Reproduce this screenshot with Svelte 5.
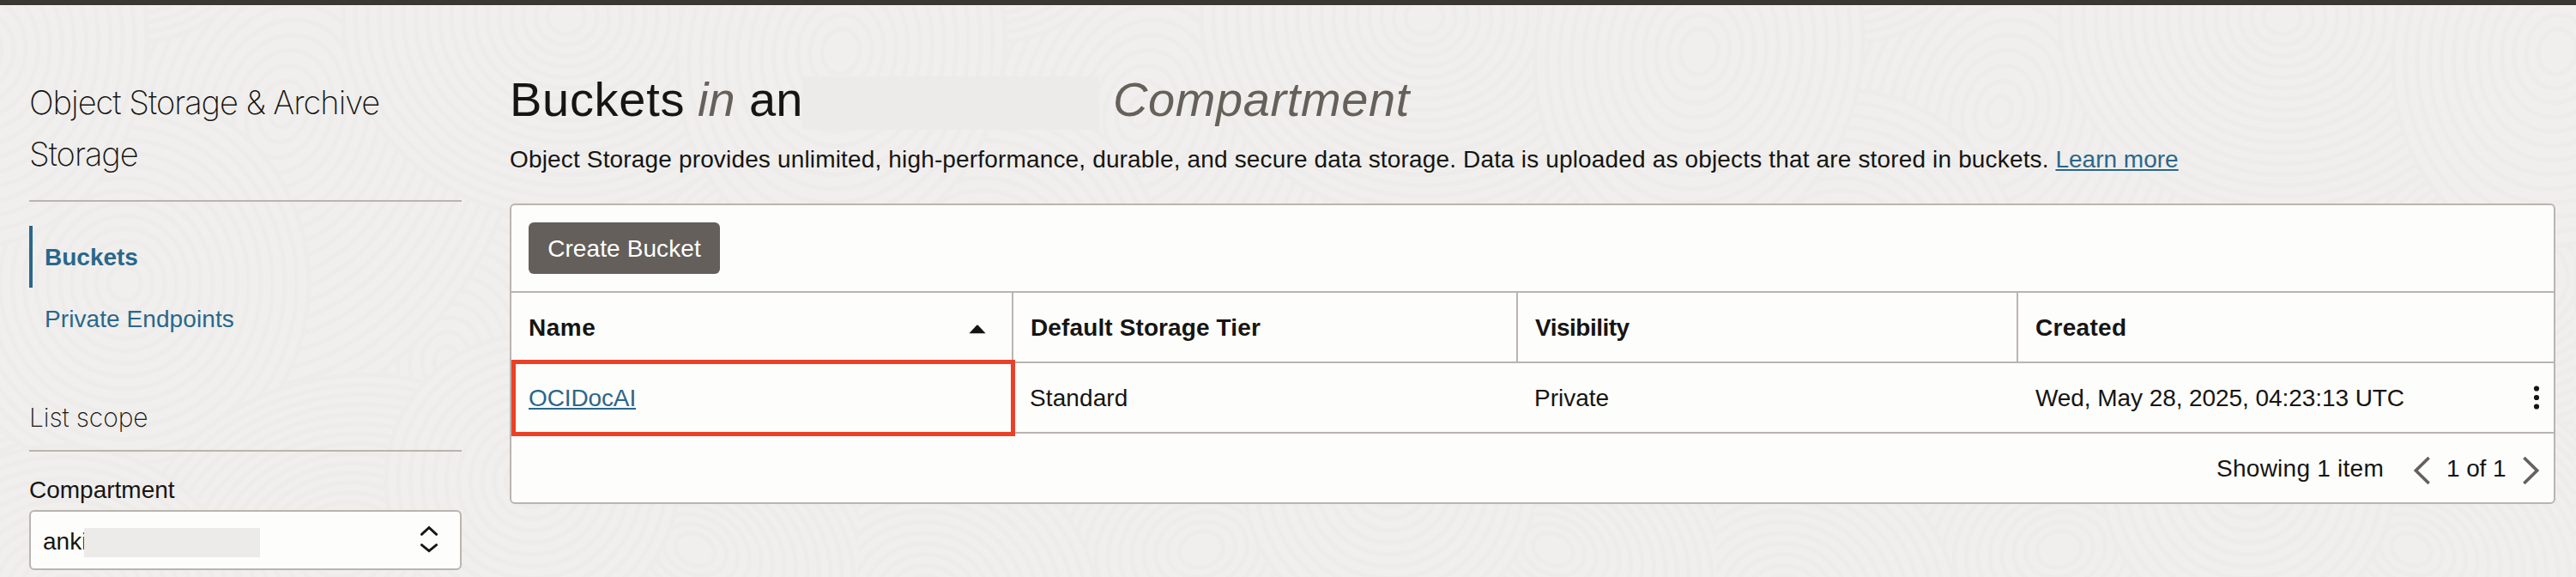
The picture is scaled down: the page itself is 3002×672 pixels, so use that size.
<script>
  const columns = [
    { label: 'Name', cls: 'name', sorted: true },
    { label: 'Default Storage Tier', cls: 'tier' },
    { label: 'Visibility', cls: 'visibility' },
    { label: 'Created', cls: 'created' }
  ];
  const buckets = [
    { name: 'OCIDocAI', tier: 'Standard', visibility: 'Private', created: 'Wed, May 28, 2025, 04:23:13 UTC' }
  ];

  // Ring groups of the repeating background texture: [centre x, centre y, outer radius, flattening, tilt]
  const groups = [
    [520, 420, 420, 1.2, 12], [930, 330, 330, 0.8, -20], [-70, 330, 330, 0.8, -20],
    [330, 130, 280, 1.3, 18], [660, 20, 260, 0.9, 0], [810, 640, 290, 0.75, 24],
    [145, 330, 215, 1.05, 0], [400, 640, 250, 0.8, -14], [80, 700, 200, 0.9, 10],
    [150, -70, 150, 0.8, 0], [980, 60, 190, 1.2, 10], [-20, 60, 190, 1.2, 10],
    [620, 560, 170, 1, 20]
  ];
  const rings = (r) => Array.from({ length: Math.floor(r / 14) }, (_, i) => r - i * 14);
</script>

<div class="page">
  <svg class="texture" width="3002" height="672" aria-hidden="true">
    <defs>
      <pattern id="swirl" width="1000" height="672" patternUnits="userSpaceOnUse">
        <rect width="1000" height="672" fill="#f0efed" />
        {#each groups as [x, y, r, k, tilt]}
          {#each rings(r) as radius}
            <ellipse cx={x} cy={y} rx={radius} ry={radius * k} transform="rotate({tilt} {x} {y})" fill="#f0efed" stroke="#edecea" stroke-width="5" />
          {/each}
        {/each}
      </pattern>
    </defs>
    <rect width="3002" height="672" fill="url(#swirl)" />
  </svg>

  <header class="topbar"></header>

  <div class="layout">
    <aside>
      <h2>Object Storage &amp; Archive Storage</h2>
      <nav>
        <a class="active" href="#buckets">Buckets</a>
        <a class="endpoints" href="#endpoints">Private Endpoints</a>
      </nav>
      <h3>List scope</h3>
      <span class="label">Compartment</span>
      <div class="select">
        <span class="value">anki<i class="mask"></i></span>
        <svg width="24" height="34" viewBox="0 0 24 34" fill="none" stroke="#161513" stroke-width="2.8" stroke-linecap="round">
          <path d="M3.4 11.4 12 3.4l8.6 8M3.4 23.6l8.6 7 8.6-7" />
        </svg>
      </div>
    </aside>

    <main>
      <h1>
        <span class="what">Buckets</span><em class="in">in</em><span class="an">an</span><i class="mask"></i><em class="comp">Compartment</em>
      </h1>
      <p><span>Object Storage provides unlimited, high-performance, durable, and secure data storage. Data is uploaded as objects that are stored in buckets.</span> <a href="#learn">Learn more</a></p>

      <section class="panel">
        <div class="toolbar"><button>Create Bucket</button></div>
        <div class="row head">
          {#each columns as col}
            <div class="cell"><span class={col.cls}>{col.label}</span>
              {#if col.sorted}
                <svg width="20" height="11" viewBox="0 0 20 11"><path d="M9.2.8a1.2 1.2 0 0 1 1.6 0L19.6 10.2H.4Z" fill="#161513" /></svg>
              {/if}
            </div>
          {/each}
        </div>
        {#each buckets as b}
          <div class="row body">
            <div class="cell marked"><a href="#bucket">{b.name}</a></div>
            <div class="cell"><span class="std">{b.tier}</span></div>
            <div class="cell"><span>{b.visibility}</span></div>
            <div class="cell"><span class="date">{b.created}</span>
              <svg width="8" height="30" viewBox="0 0 8 30" fill="#161513"><circle cx="4" cy="4.5" r="3.1" /><circle cx="4" cy="15" r="3.1" /><circle cx="4" cy="25.5" r="3.1" /></svg>
            </div>
          </div>
        {/each}
        <footer>
          <span class="showing">Showing 1 item</span>
          <svg class="prev" width="20" height="36" viewBox="0 0 20 36"><path d="M17.6 3 2.4 18l15.2 15" /></svg>
          <span class="pages">1 of 1</span>
          <svg class="next" width="20" height="36" viewBox="0 0 20 36"><path d="M2.4 3l15.2 15L2.4 33" /></svg>
        </footer>
      </section>
    </main>
  </div>
</div>

<style>
  :global(body) { background: #f0efed; overflow: hidden; }
  .page {
    position: relative;
    height: 672px;
    overflow: hidden;
    color: #161513;
    font: 28px/40px "Liberation Sans", Arial, sans-serif;
    white-space: nowrap;
  }
  .texture { position: absolute; inset: 0; }
  svg { display: block; flex: none; }
  a { color: #2a678b; }
  .topbar { position: relative; height: 6px; background: #3a3632; border-bottom: 1px solid #f6f5f4; }
  .layout { position: relative; display: grid; grid-template-columns: 504px 2384px; column-gap: 56px; padding-left: 34px; }

  aside { padding-top: 82px; }
  h2, h3 { margin: 0; font-family: Inter, sans-serif; font-weight: 200; border-bottom: 2px solid #bab4af; }
  h2 { font-size: 38px; line-height: 60px; letter-spacing: -1.0px; padding-bottom: 24px; white-space: normal; }
  nav { display: flex; flex-direction: column; margin-top: 28px; }
  nav a { box-sizing: border-box; height: 72px; line-height: 74px; padding-left: 14px; border-left: 4px solid transparent; text-decoration: none; }
  nav .active { font-weight: 700; border-color: #2a678b; }
  nav .endpoints { letter-spacing: 0.08px; }
  h3 { margin-top: 55px; font-size: 30px; line-height: 48px; letter-spacing: -0.1px; padding-bottom: 14px; }
  .label { display: block; margin: 25px 0 3px; }
  .select {
    display: flex; align-items: center; justify-content: space-between;
    box-sizing: border-box; height: 70px; padding: 0 24px 0 14px;
    border: 2px solid #bab4af; border-radius: 6px; background: #fdfdfb;
  }
  .select svg { margin: -3px 0 0; }
  .value { position: relative; padding-top: 4px; }
  .mask { background: #ecebea; }
  .value .mask { position: absolute; left: 48px; top: 8px; width: 205px; height: 34px; }

  main { padding-top: 73px; }
  h1 { display: flex; margin: 0; font-size: 56px; line-height: 72px; font-weight: 400; }
  h1 em { color: #66605b; }
  .what { width: 219px; letter-spacing: 0.7px; }
  .in { width: 60px; }
  .an { width: 62px; }
  h1 .mask { width: 346px; height: 62px; margin-top: 9px; }
  .comp { margin-left: 16px; letter-spacing: 0.6px; }
  p { margin: 14px 0 31px; }
  p span { letter-spacing: 0.158px; }
  a { text-decoration-thickness: 2px; text-underline-offset: 2px; }

  .panel { box-sizing: border-box; border: 2px solid #bab4af; border-radius: 6px; background: #fdfdfb; }
  .toolbar { display: flex; align-items: center; height: 100px; padding-left: 20px; border-bottom: 2px solid #bab4af; }
  button {
    width: 223px; height: 60px; padding: 2px 0 0; border: 0; border-radius: 6px;
    background: #645f5a; color: #fff; font: inherit; letter-spacing: 0.1px;
  }
  .row { display: grid; grid-template-columns: 585px 588px 583px 624px; height: 80px; border-bottom: 2px solid #bab4af; }
  .cell { position: relative; display: flex; align-items: center; justify-content: space-between; padding-left: 20px; box-sizing: border-box; }
  .cell span, .cell a, footer span { padding-top: 2px; }
  .head { font-weight: 700; }
  .head .cell:not(:last-child) { border-right: 2px solid #bab4af; }
  .head .cell svg { margin: 5px 30px 0 0; }
  .name { letter-spacing: 0.5px; }
  .tier { letter-spacing: 0.12px; }
  .visibility { letter-spacing: -0.5px; }
  .created { letter-spacing: 0.3px; }
  .body .cell a { letter-spacing: -0.12px; }
  .body .cell:nth-child(2), .body .cell:nth-child(3) { padding-left: 19px; }
  .std { letter-spacing: 0.1px; }
  .date { letter-spacing: -0.07px; }
  .body .cell svg { margin-right: 16px; }
  .marked::after { content: ""; position: absolute; inset: -4px -2px -5px 0; border: 5px solid #ec4026; }

  footer { display: flex; align-items: center; justify-content: flex-end; height: 80px; }
  footer svg { margin-top: 6px; }
  footer path { fill: none; stroke: #665f5b; stroke-width: 3.6; }
  .showing { letter-spacing: 0.25px; margin-right: 35px; }
  .prev { margin-right: 18px; }
  .pages { letter-spacing: -0.1px; width: 88px; }
  .next { margin-right: 17px; }
</style>
